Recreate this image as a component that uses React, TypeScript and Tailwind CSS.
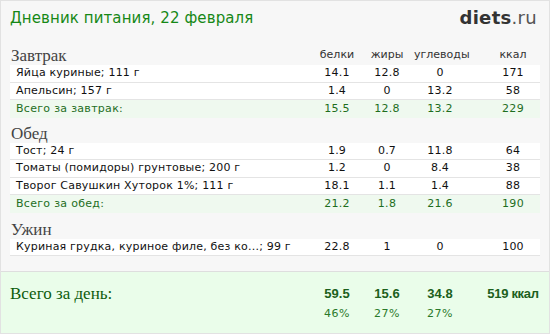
const meals = [
  {
    title: 'Завтрак',
    gap: 'mt-[10px]',
    total: 'Всего за завтрак:',
    sum: ['15.5', '12.8', '13.2', '229'],
    rows: [
      { name: 'Яйца куриные; 111 г', v: ['14.1', '12.8', '0', '171'] },
      { name: 'Апельсин; 157 г', v: ['1.4', '0', '13.2', '58'] },
    ],
  },
  {
    title: 'Обед',
    gap: 'mt-[5px]',
    total: 'Всего за обед:',
    sum: ['21.2', '1.8', '21.6', '190'],
    rows: [
      { name: 'Тост; 24 г', v: ['1.9', '0.7', '11.8', '64'] },
      { name: 'Томаты (помидоры) грунтовые; 200 г', v: ['1.2', '0', '8.4', '38'] },
      { name: 'Творог Савушкин Хуторок 1%; 111 г', v: ['18.1', '1.1', '1.4', '88'] },
    ],
  },
  {
    title: 'Ужин',
    gap: 'mt-[6px]',
    rows: [
      { name: 'Куриная грудка, куриное филе, без ко...; 99 г', v: ['22.8', '1', '0', '100'] },
    ],
  },
];

const cols = 'grid grid-cols-[1fr_46px_54px_52px_74px]';
const sans = "font-['DejaVu_Sans',Verdana,sans-serif]";
const serif = "font-['Liberation_Serif',Georgia,serif]";
const arial = "font-['Liberation_Sans',Arial,sans-serif]";

function Cells({ v }: { v: string[] }) {
  return (
    <>
      <span className="text-center">{v[0]}</span>
      <span className="text-center">{v[1]}</span>
      <span className="text-center">{v[2]}</span>
      <span className="text-center pl-[20px]">{v[3]}</span>
    </>
  );
}

export default function App() {
  return (
    <div className="w-[550px] h-[334px] border border-[#e2e2e2] bg-[#f7f7f7] flex flex-col overflow-hidden">
      {/* Header */}
      <div className="flex items-center justify-between pl-[9px] pr-[12px] h-[34px] shrink-0">
        <h1 className={`${sans} text-[15px] text-[#168816] tracking-[0.1px]`}>Дневник питания, 22 февраля</h1>
        <div className={`${sans} text-[18px] leading-none text-[#333] tracking-[0.3px]`}>
          <span className="font-bold">diets</span>
          <span className="text-[#555]">.ru</span>
        </div>
      </div>

      {/* Meals */}
      <div className={`px-[9px] flex-1 ${sans} text-[11px]`}>
        {meals.map((m, i) => (
          <div key={m.title} className={m.gap}>
            <div className={`${cols} items-center h-[20px]`}>
              <span className={`${serif} text-[17px] leading-[18px] pt-[2px] text-[#444] pl-[1px]`}>{m.title}</span>
              {i === 0 && (
                <>
                  <span className="text-center text-[#333]">белки</span>
                  <span className="text-center text-[#333]">жиры</span>
                  <span className="text-center text-[#333]">углеводы</span>
                  <span className="text-center text-[#333] pl-[20px]">ккал</span>
                </>
              )}
            </div>
            <div>
              {m.rows.map((r) => (
                <div key={r.name} className={`${cols} items-center h-[17.5px] bg-white border-b border-[#e4e4e4] text-[#111] tracking-[0.2px]`}>
                  <span className="pl-[6px] whitespace-nowrap">{r.name}</span>
                  <Cells v={r.v} />
                </div>
              ))}
              {m.total && m.sum && (
                <div className={`${cols} items-center h-[17.5px] bg-[#eff9ef] text-[#1e6e1e] tracking-[0.3px]`}>
                  <span className="pl-[6px]">{m.total}</span>
                  <Cells v={m.sum} />
                </div>
              )}
            </div>
          </div>
        ))}
      </div>

      {/* Day total */}
      <div className="h-[62px] shrink-0 border-t border-[#dedede] bg-[#eafdea] px-[9px] pt-[12px]">
        <div className={`${cols} items-center h-[20px]`}>
          <span className={`${serif} text-[17px] leading-[20px] text-[#0d5c0d]`}>Всего за день:</span>
          <span className={`text-center ${arial} font-bold text-[13px] text-[#1c601c]`}>59.5</span>
          <span className={`text-center ${arial} font-bold text-[13px] text-[#1c601c]`}>15.6</span>
          <span className={`text-center ${arial} font-bold text-[13px] text-[#1c601c]`}>34.8</span>
          <span className={`text-center pl-[20px] ${arial} font-bold text-[13px] text-[#1c601c] whitespace-nowrap tracking-[-0.3px]`}>519 ккал</span>
        </div>
        <div className={`${cols} items-center mt-[3px] h-[14px] leading-[14px] ${sans} text-[11px] text-[#2a7a2a] tracking-[0.6px]`}>
          <span />
          <span className="text-center">46%</span>
          <span className="text-center">27%</span>
          <span className="text-center">27%</span>
          <span />
        </div>
      </div>
    </div>
  );
}
